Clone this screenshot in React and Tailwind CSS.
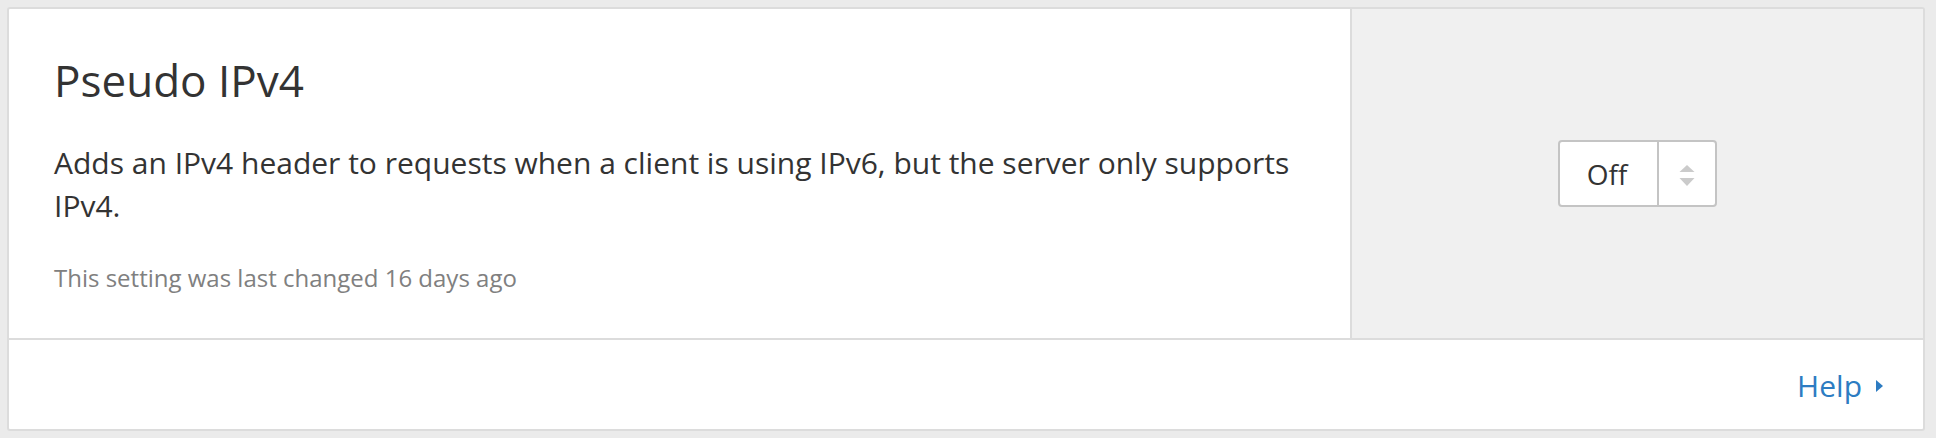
const font = { fontFamily: '"Open Sans", "Noto Sans", sans-serif' };

const Stepper = () => (
  <svg width="16" height="22" viewBox="0 0 16 22" className="block">
    <polygon points="8,0 15.5,7 0.5,7" fill="#cbcbcb" />
    <polygon points="0.5,13 15.5,13 8,21" fill="#cbcbcb" />
  </svg>
);

const SettingCard = () => {
  return (
    <div className="w-[1918px] h-[424px] bg-white border-2 border-[#dcdcdc] rounded-[3px] flex flex-col">
      <div className="flex h-[331px] border-b-2 border-[#dcdcdc]">
        <div className="w-[1341px] pl-[45px] pt-[41px]">
          <h1 className="text-[44px] leading-[60px] text-[#333333] font-normal">Pseudo IPv4</h1>
          <p className="mt-[31px] text-[30px] leading-[43px] text-[#333333]">
            Adds an IPv4 header to requests when a client is using IPv6, but the server only supports IPv4.
          </p>
          <p className="mt-[34px] text-[24px] leading-[33px] text-[#808080]">
            This setting was last changed 16 days ago
          </p>
        </div>
        <div className="flex-1 border-l-2 border-[#dcdcdc] bg-[#f0f0f0] flex items-center justify-center">
          <div className="w-[159px] h-[67px] bg-white border-2 border-[#c4c4c4] rounded-[4px] flex">
            <div className="w-[99px] border-r-2 border-[#c4c4c4] flex items-center justify-center pr-[3px] text-[28px] text-[#333333]">
              Off
            </div>
            <div className="flex-1 flex items-center justify-center pt-[4px]">
              <Stepper />
            </div>
          </div>
        </div>
      </div>
      <div className="flex-1 flex items-center justify-end pr-[40px] pt-[2px]">
        <a href="#" className="text-[30px] text-[#2d7cc2] leading-[40px]">Help</a>
        <svg width="7" height="12" viewBox="0 0 7 12" className="ml-[14px]">
          <polygon points="0,0 7,6 0,12" fill="#2d7cc2" />
        </svg>
      </div>
    </div>
  );
};

export default function App() {
  return (
    <div className="w-[1936px] h-[438px] bg-[#ebebeb] pt-[7px] pl-[7px]" style={font}>
      <SettingCard />
    </div>
  );
}
